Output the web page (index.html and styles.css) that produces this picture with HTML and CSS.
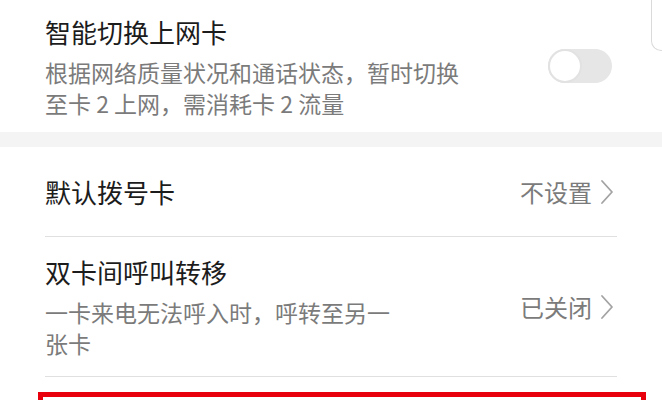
FILE: index.html
```html
<!DOCTYPE html>
<html lang="zh-CN">
<head>
<meta charset="utf-8">
<title>双卡管理</title>
<link rel="stylesheet" href="styles.css">
</head>
<body>
<div class="page">
  <div class="corner-box"></div>

  <section class="group">
    <div class="row row-switch">
      <div class="text wide">
        <div class="title">智能切换上网卡</div>
        <div class="sub">根据网络质量状况和通话状态，暂时切换至卡 2 上网，需消耗卡 2 流量</div>
      </div>
      <div class="toggle"><span class="knob"></span></div>
    </div>
  </section>

  <div class="band"></div>

  <section class="group">
    <div class="row row-simple">
      <div class="text">
        <div class="title">默认拨号卡</div>
      </div>
      <div class="value">
        <span>不设置</span>
        <svg class="chev" width="14" height="26" viewBox="0 0 14 26"><polyline points="2,2 12,13 2,24" fill="none" stroke="#a3a3a3" stroke-width="1.8" stroke-linecap="round" stroke-linejoin="round"/></svg>
      </div>
    </div>
    <div class="divider"></div>
    <div class="row row-detail">
      <div class="text narrow">
        <div class="title">双卡间呼叫转移</div>
        <div class="sub">一卡来电无法呼入时，呼转至另一张卡</div>
      </div>
      <div class="value">
        <span>已关闭</span>
        <svg class="chev" width="14" height="26" viewBox="0 0 14 26"><polyline points="2,2 12,13 2,24" fill="none" stroke="#a3a3a3" stroke-width="1.8" stroke-linecap="round" stroke-linejoin="round"/></svg>
      </div>
    </div>
    <div class="divider"></div>
  </section>

  <div class="highlight"></div>
</div>
</body>
</html>
```

FILE: styles.css
```css
html, body {
  margin: 0;
  padding: 0;
  background: #ffffff;
}

body {
  width: 662px;
  height: 400px;
  overflow: hidden;
  font-family: "Noto Sans CJK SC", "Noto Sans", sans-serif;
}

.page {
  position: relative;
  width: 662px;
}

.corner-box {
  position: absolute;
  left: 651px;
  top: -12px;
  width: 11px;
  height: 63px;
  border: 1px solid #dadada;
  border-right: 0;
  border-radius: 10px 0 0 10px;
  box-sizing: border-box;
}

.group {
  background: #ffffff;
}

.row {
  display: flex;
  align-items: center;
  justify-content: space-between;
  padding: 0 48px 0 45px;
}

.row-switch {
  height: 132px;
}

.row-simple {
  height: 89px;
}

.row-detail {
  height: 139px;
}

.text {
  display: flex;
  flex-direction: column;
}

.text.wide {
  max-width: 420px;
}

.text.narrow {
  max-width: 352px;
}

.title {
  font-size: 26px;
  line-height: 36px;
  color: #1c1c1c;
}

.sub {
  margin-top: 7px;
  font-size: 23px;
  line-height: 31px;
  color: #7b7b7b;
}

.toggle {
  position: relative;
  width: 64px;
  height: 34px;
  border-radius: 17px;
  background: #e6e6e6;
  margin-right: 2px;
  flex-shrink: 0;
}

.knob {
  position: absolute;
  left: 0;
  top: 0;
  width: 34px;
  height: 34px;
  border-radius: 50%;
  background: #ffffff;
  border: 2.5px solid #e2e2e2;
  box-sizing: border-box;
}

.value {
  display: flex;
  align-items: center;
  gap: 8px;
  font-size: 24px;
  line-height: 31px;
  color: #7b7b7b;
  flex-shrink: 0;
}

.chev {
  display: block;
}

.band {
  height: 15px;
  background: #f4f4f4;
}

.divider {
  height: 1px;
  margin: 0 45px;
  background: #e0e0e0;
}

.highlight {
  margin: 15px 0 0 38px;
  width: 608px;
  height: 8px;
  border: 5px solid #e8000c;
  border-bottom: 0;
  box-sizing: border-box;
}
```
